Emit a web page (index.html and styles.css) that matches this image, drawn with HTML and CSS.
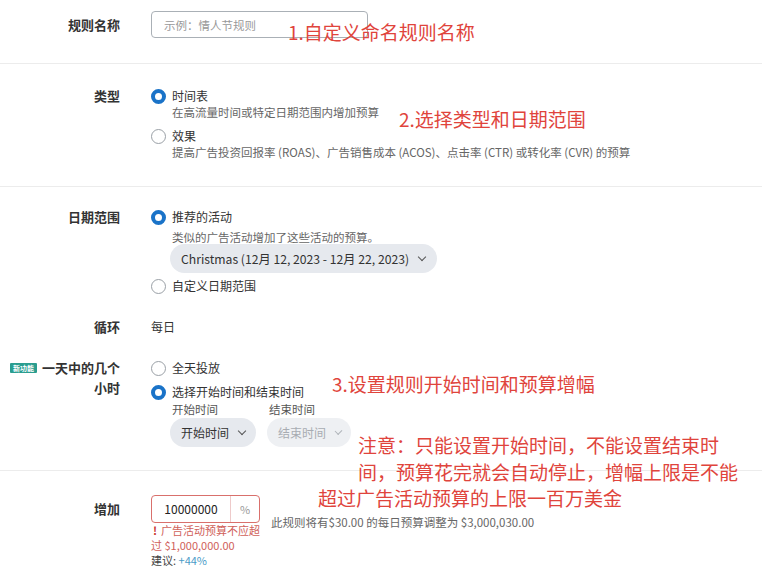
FILE: index.html
```html
<!DOCTYPE html>
<html lang="zh-CN">
<head>
  <meta charset="UTF-8" />
  <title>预算规则</title>
  <link rel="stylesheet" href="styles.css">
</head>
<body>
  <div class="page">
    <!-- 规则名称 -->
    <div class="row row-name">
      <div class="label">规则名称</div>
      <div class="field">
        <input class="text-input" type="text" placeholder="示例：情人节规则" />
      </div>
    </div>

    <!-- 类型 -->
    <div class="row row-type">
      <div class="label">类型</div>
      <div class="field">
        <div class="option">
          <span class="radio checked"></span><span>时间表</span>
        </div>
        <div class="desc">在高流量时间或特定日期范围内增加预算</div>
        <div class="option gap">
          <span class="radio"></span><span>效果</span>
        </div>
        <div class="desc">提高广告投资回报率 (ROAS)、广告销售成本 (ACOS)、点击率 (CTR) 或转化率 (CVR) 的预算</div>
      </div>
    </div>

    <!-- 日期范围 / 循环 / 小时 -->
    <div class="row row-date">
      <div class="sub">
        <div class="label">日期范围</div>
        <div class="field">
          <div class="option">
            <span class="radio checked"></span><span>推荐的活动</span>
          </div>
          <div class="desc small">类似的广告活动增加了这些活动的预算。</div>
          <div class="pill">Christmas (12月 12, 2023 - 12月 22, 2023) <span class="chev"></span></div>
          <div class="option custom">
            <span class="radio"></span><span>自定义日期范围</span>
          </div>
        </div>
      </div>

      <div class="sub sub-loop">
        <div class="label">循环</div>
        <div class="field plain">每日</div>
      </div>

      <div class="sub sub-hours">
        <div class="label label-hours">
          <span class="badge">新功能</span> 一天中的几个<br>小时
        </div>
        <div class="field">
          <div class="option">
            <span class="radio"></span><span>全天投放</span>
          </div>
          <div class="option gap">
            <span class="radio checked"></span><span>选择开始时间和结束时间</span>
          </div>
          <div class="times">
            <div class="time-col">
              <div class="time-label">开始时间</div>
              <div class="pill pill-time">开始时间 <span class="chev"></span></div>
            </div>
            <div class="time-col">
              <div class="time-label">结束时间</div>
              <div class="pill pill-time disabled">结束时间 <span class="chev"></span></div>
            </div>
          </div>
        </div>
      </div>
    </div>

    <!-- 增加 -->
    <div class="row row-inc">
      <div class="label label-inc">增加</div>
      <div class="field">
        <div class="inc-line">
          <div class="pct-box">
            <span class="pct-val">10000000</span>
            <span class="pct-unit">%</span>
          </div>
          <span class="hint">此规则将有$30.00 的每日预算调整为 $3,000,030.00</span>
        </div>
        <div class="error">广告活动预算不应超过 $1,000,000.00</div>
        <div class="suggest">建议: <span>+44%</span></div>
      </div>
    </div>

    <!-- 标注 -->
    <div class="note note-1">1.自定义命名规则名称</div>
    <div class="note note-2">2.选择类型和日期范围</div>
    <div class="note note-3">3.设置规则开始时间和预算增幅</div>
    <div class="note note-4">
      <div class="n1">注意：只能设置开始时间，不能设置结束时</div>
      <div class="n2">间，预算花完就会自动停止，增幅上限是不能</div>
      <div class="n3">超过广告活动预算的上限一百万美金</div>
    </div>
  </div>
</body>
</html>
```

FILE: styles.css
```css
body {
  margin: 0;
  background: #fff;
  font-family: "Noto Sans CJK SC", "Noto Sans", sans-serif;
  color: #333;
  overflow: hidden;
}

.page {
  position: relative;
  width: 762px;
  height: 569px;
}

.row {
  border-bottom: 1px solid #ececec;
}

.row,
.sub {
  display: grid;
  grid-template-columns: 120px 1fr;
  column-gap: 31px;
}

.row-date {
  display: block;
}

.label {
  text-align: right;
  font-weight: bold;
  font-size: 13px;
  line-height: 16px;
  color: #333;
}

.field {
  font-size: 12px;
  line-height: 16px;
}

/* 规则名称 */
.row-name {
  height: 52px;
  padding-top: 11px;
}

.row-name .label {
  line-height: 27px;
}

.text-input {
  box-sizing: border-box;
  width: 217px;
  height: 27px;
  border: 1px solid #aab0b6;
  border-radius: 4px;
  padding: 0 12px;
  font-family: inherit;
  font-size: 11.5px;
  outline: none;
}

.text-input::placeholder {
  color: #999;
}

/* 单选 */
.option {
  display: flex;
  align-items: center;
  gap: 6px;
  height: 16px;
  color: #333;
}

.option.gap {
  margin-top: 8px;
}

.radio {
  box-sizing: border-box;
  width: 15px;
  height: 15px;
  border-radius: 50%;
  border: 1px solid #9aa0a6;
  flex-shrink: 0;
}

.radio.checked {
  border: 4px solid #1a73c8;
}

.desc {
  padding-left: 21px;
  font-size: 11.5px;
  color: #666;
}

.desc.small {
  line-height: 14px;
  margin-top: 5px;
}

/* 类型 */
.row-type {
  height: 98px;
  padding-top: 24px;
}

/* 日期范围 */
.row-date {
  height: 261px;
  padding-top: 22px;
}

.pill {
  display: inline-flex;
  align-items: center;
  gap: 8px;
  height: 29px;
  margin-left: 19px;
  padding: 0 12px 0 11px;
  border-radius: 15px;
  background: #e6e9ee;
  font-size: 12.2px;
  color: #333;
  white-space: nowrap;
}

.chev {
  width: 5px;
  height: 5px;
  border-right: 1.5px solid #555;
  border-bottom: 1.5px solid #555;
  transform: translateY(-2px) rotate(45deg);
  margin-left: 2px;
}

.option.custom {
  margin-top: 5px;
}

.sub-loop {
  margin-top: 25px;
}

.plain {
  color: #333;
}

.sub-hours {
  margin-top: 25px;
}

.label-hours {
  line-height: 20px;
  margin-top: -2px;
}

.badge {
  display: inline-block;
  vertical-align: 2px;
  background: #2a9d8f;
  color: #fff;
  font-size: 7px;
  line-height: 10px;
  padding: 0 3px;
  margin-right: 2px;
  border-radius: 1px;
}

.times {
  display: flex;
  gap: 11px;
  margin-top: 2px;
  padding-left: 19px;
}

.time-label {
  padding-left: 2px;
  line-height: 14px;
  font-size: 11.5px;
  color: #555;
  margin-bottom: 2px;
}

.pill-time {
  margin-left: 0;
  gap: 8px;
  width: 86px;
  box-sizing: border-box;
  padding: 0 10px 0 11px;
  font-size: 12px;
}

.pill-time.disabled {
  width: 84px;
  background: #eef0f3;
  color: #a8acb2;
}

.pill-time.disabled .chev {
  border-color: #b0b4ba;
}

/* 增加 */
.row-inc {
  border-bottom: none;
  padding-top: 24px;
}

.label-inc {
  line-height: 28px;
}

.inc-line {
  display: flex;
  align-items: flex-end;
  gap: 11px;
}

.pct-box {
  box-sizing: border-box;
  display: flex;
  width: 109px;
  height: 28px;
  border: 1px solid #d9706c;
  border-radius: 4px;
}

.pct-val {
  width: 78px;
  border-right: 1px solid #eecaca;
  text-align: center;
  line-height: 26px;
  font-size: 12px;
  color: #222;
}

.pct-unit {
  flex: 1;
  text-align: center;
  line-height: 26px;
  color: #999;
  font-size: 11px;
}

.hint {
  font-size: 11.5px;
  color: #666;
  line-height: 14px;
  margin-bottom: -6px;
}

.error {
  width: 116px;
  font-size: 11px;
  line-height: 15px;
  color: #d0615a;
}

.error::before {
  content: "!";
  margin: 0 4px 0 2px;
  font-weight: bold;
  color: #c9302c;
}

.suggest {
  font-size: 11px;
  line-height: 15px;
  color: #444;
}

.suggest span {
  color: #4a9bc7;
}

/* 标注 */
.note {
  position: absolute;
  color: #e0443c;
  font-size: 19px;
  line-height: 26.5px;
  white-space: nowrap;
}

.note-1 {
  left: 288px;
  top: 19px;
}

.note-2 {
  left: 399px;
  top: 106px;
}

.note-3 {
  left: 332px;
  top: 371px;
}

.note-4 {
  left: 318px;
  top: 432px;
}

.note-4 .n1,
.note-4 .n2 {
  padding-left: 40px;
}
```
